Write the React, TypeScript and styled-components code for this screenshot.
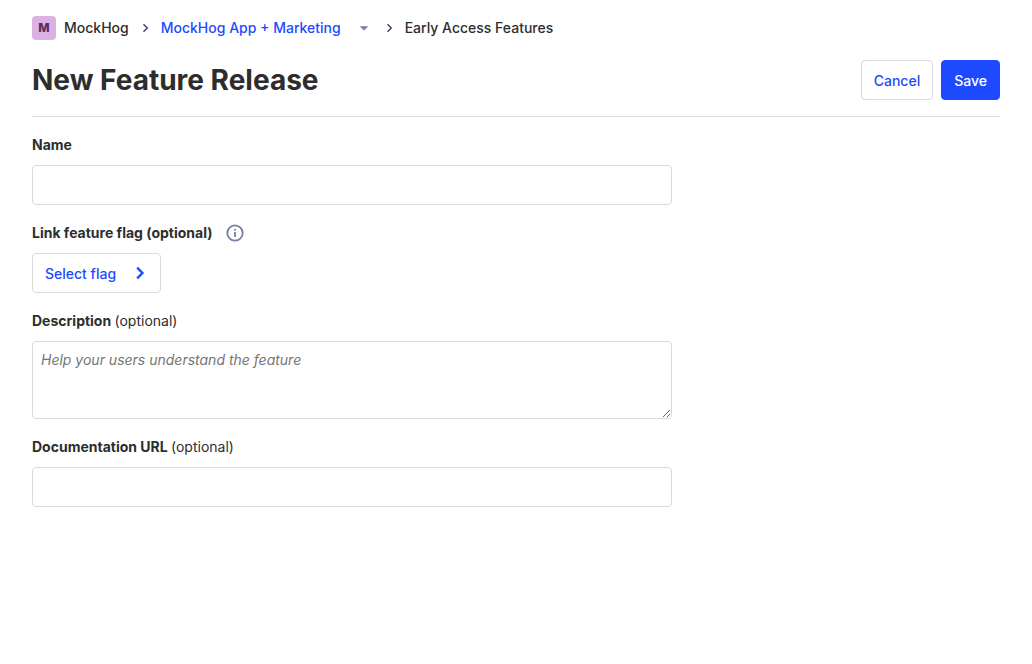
import React from 'react';
import styled, { createGlobalStyle } from 'styled-components';

const Global = createGlobalStyle`
  *, *::before, *::after { box-sizing: border-box; }
  body {
    margin: 0;
    background: #fff;
    color: #2d2d2d;
    font-family: Inter, 'Liberation Sans', sans-serif;
    font-size: 14px;
    line-height: 20px;
  }
`;

const Scene = styled.main`
  padding: 16px 32px;
`;

const Breadcrumbs = styled.nav`
  display: flex;
  align-items: center;
  height: 24px;
  font-weight: 500;
  white-space: nowrap;
`;

const Lettermark = styled.span`
  display: flex;
  align-items: center;
  justify-content: center;
  width: 24px;
  height: 24px;
  margin-right: 8px;
  border-radius: 4px;
  background: #dcb1e3;
  color: #572e5e;
  font-size: 12px;
  font-weight: 800;
`;

const Crumb = styled.a<{ $active?: boolean }>`
  display: flex;
  align-items: center;
  color: ${(p) => (p.$active ? '#1d4aff' : '#2d2d2d')};
  text-decoration: none;
`;

const Separator = styled.svg`
  flex: none;
  width: 16px;
  height: 16px;
  margin: 0 8px;
`;

const Caret = styled.svg`
  flex: none;
  width: 18px;
  height: 18px;
  margin-left: 14px;
`;

const PageHeader = styled.header`
  display: flex;
  align-items: center;
  justify-content: space-between;
  margin-top: 16px;
  padding: 4px 0 16px;
  border-bottom: 1px solid #d9d9d9;
`;

const Title = styled.h1`
  margin: 0;
  font-size: 28px;
  line-height: 40px;
  font-weight: 700;
`;

const Actions = styled.div`
  display: flex;
  gap: 8px;
`;

const Button = styled.button<{ $primary?: boolean; $withIcon?: boolean }>`
  display: inline-flex;
  align-items: center;
  gap: 12px;
  height: 40px;
  padding: 2px ${(p) => (p.$withIcon ? 8 : 12)}px 0 12px;
  border: 1px solid ${(p) => (p.$primary ? '#1d4aff' : '#d9d9d9')};
  border-radius: 4px;
  background: ${(p) => (p.$primary ? '#1d4aff' : '#fff')};
  color: ${(p) => (p.$primary ? '#fff' : '#1d4aff')};
  font: inherit;
  font-weight: 500;
  cursor: pointer;
`;

const Form = styled.form`
  display: flex;
  flex-direction: column;
  gap: 16px;
  max-width: 640px;
  padding-top: 16px;
`;

const Field = styled.div`
  display: flex;
  flex-direction: column;
  align-items: flex-start;
  gap: 8px;
`;

const LabelRow = styled.div`
  display: flex;
  align-items: center;
  height: 24px;
  gap: 12px;
`;

const Label = styled.label`
  font-weight: 700;
`;

const Optional = styled.span`
  font-weight: 400;
`;

const Input = styled.input`
  width: 100%;
  height: 40px;
  padding: 8px;
  border: 1px solid #d9d9d9;
  border-radius: 4px;
  font: inherit;
`;

const TextArea = styled.textarea`
  display: block;
  width: 100%;
  height: 78px;
  padding: 8px;
  border: 1px solid #d9d9d9;
  border-radius: 4px;
  font: inherit;
  resize: vertical;
  &::placeholder { font-style: oblique; }
`;

const ChevronRight = () => (
  <Separator viewBox="0 0 16 16" fill="none" stroke="#35416b" strokeWidth="1.4" aria-hidden="true">
    <path d="M6.5 4.2 10.3 8 6.5 11.8" />
  </Separator>
);

const InfoIcon = () => (
  <svg width="20" height="20" viewBox="0 0 20 20" fill="none" stroke="#747ea1" strokeWidth="1.8" aria-hidden="true">
    <circle cx="10" cy="10" r="7.7" />
    <path d="M10 9v5M10 6v1.8" />
  </svg>
);

const SelectIcon = () => (
  <svg width="24" height="24" viewBox="0 0 24 24" fill="none" stroke="#1d4aff" strokeWidth="2.4" aria-hidden="true">
    <path d="m9.2 5.7 5.2 5.3-5.2 5.3" />
  </svg>
);

export default function App() {
  return (
    <>
      <Global />
      <Scene>
        <Breadcrumbs aria-label="Breadcrumb">
          <Crumb href="#organization"><Lettermark>M</Lettermark>MockHog</Crumb>
          <ChevronRight />
          <Crumb href="#project" $active>
            MockHog App + Marketing
            <Caret viewBox="0 0 18 18" fill="#747ea1" aria-hidden="true">
              <path d="M4.8 7.2h8.4L9 11.4z" />
            </Caret>
          </Crumb>
          <ChevronRight />
          <Crumb href="#features">Early Access Features</Crumb>
        </Breadcrumbs>
        <PageHeader>
          <Title>New Feature Release</Title>
          <Actions>
            <Button type="button">Cancel</Button>
            <Button type="submit" form="release" $primary>Save</Button>
          </Actions>
        </PageHeader>
        <Form id="release">
          <Field>
            <LabelRow><Label htmlFor="name">Name</Label></LabelRow>
            <Input id="name" />
          </Field>
          <Field>
            <LabelRow>
              <Label htmlFor="flag">Link feature flag (optional)</Label>
              <InfoIcon />
            </LabelRow>
            <Button id="flag" type="button" $withIcon>
              Select flag
              <SelectIcon />
            </Button>
          </Field>
          <Field>
            <LabelRow><Label htmlFor="description">Description <Optional>(optional)</Optional></Label></LabelRow>
            <TextArea id="description" placeholder="Help your users understand the feature" />
          </Field>
          <Field>
            <LabelRow><Label htmlFor="documentation">Documentation URL <Optional>(optional)</Optional></Label></LabelRow>
            <Input id="documentation" />
          </Field>
        </Form>
      </Scene>
    </>
  );
}
